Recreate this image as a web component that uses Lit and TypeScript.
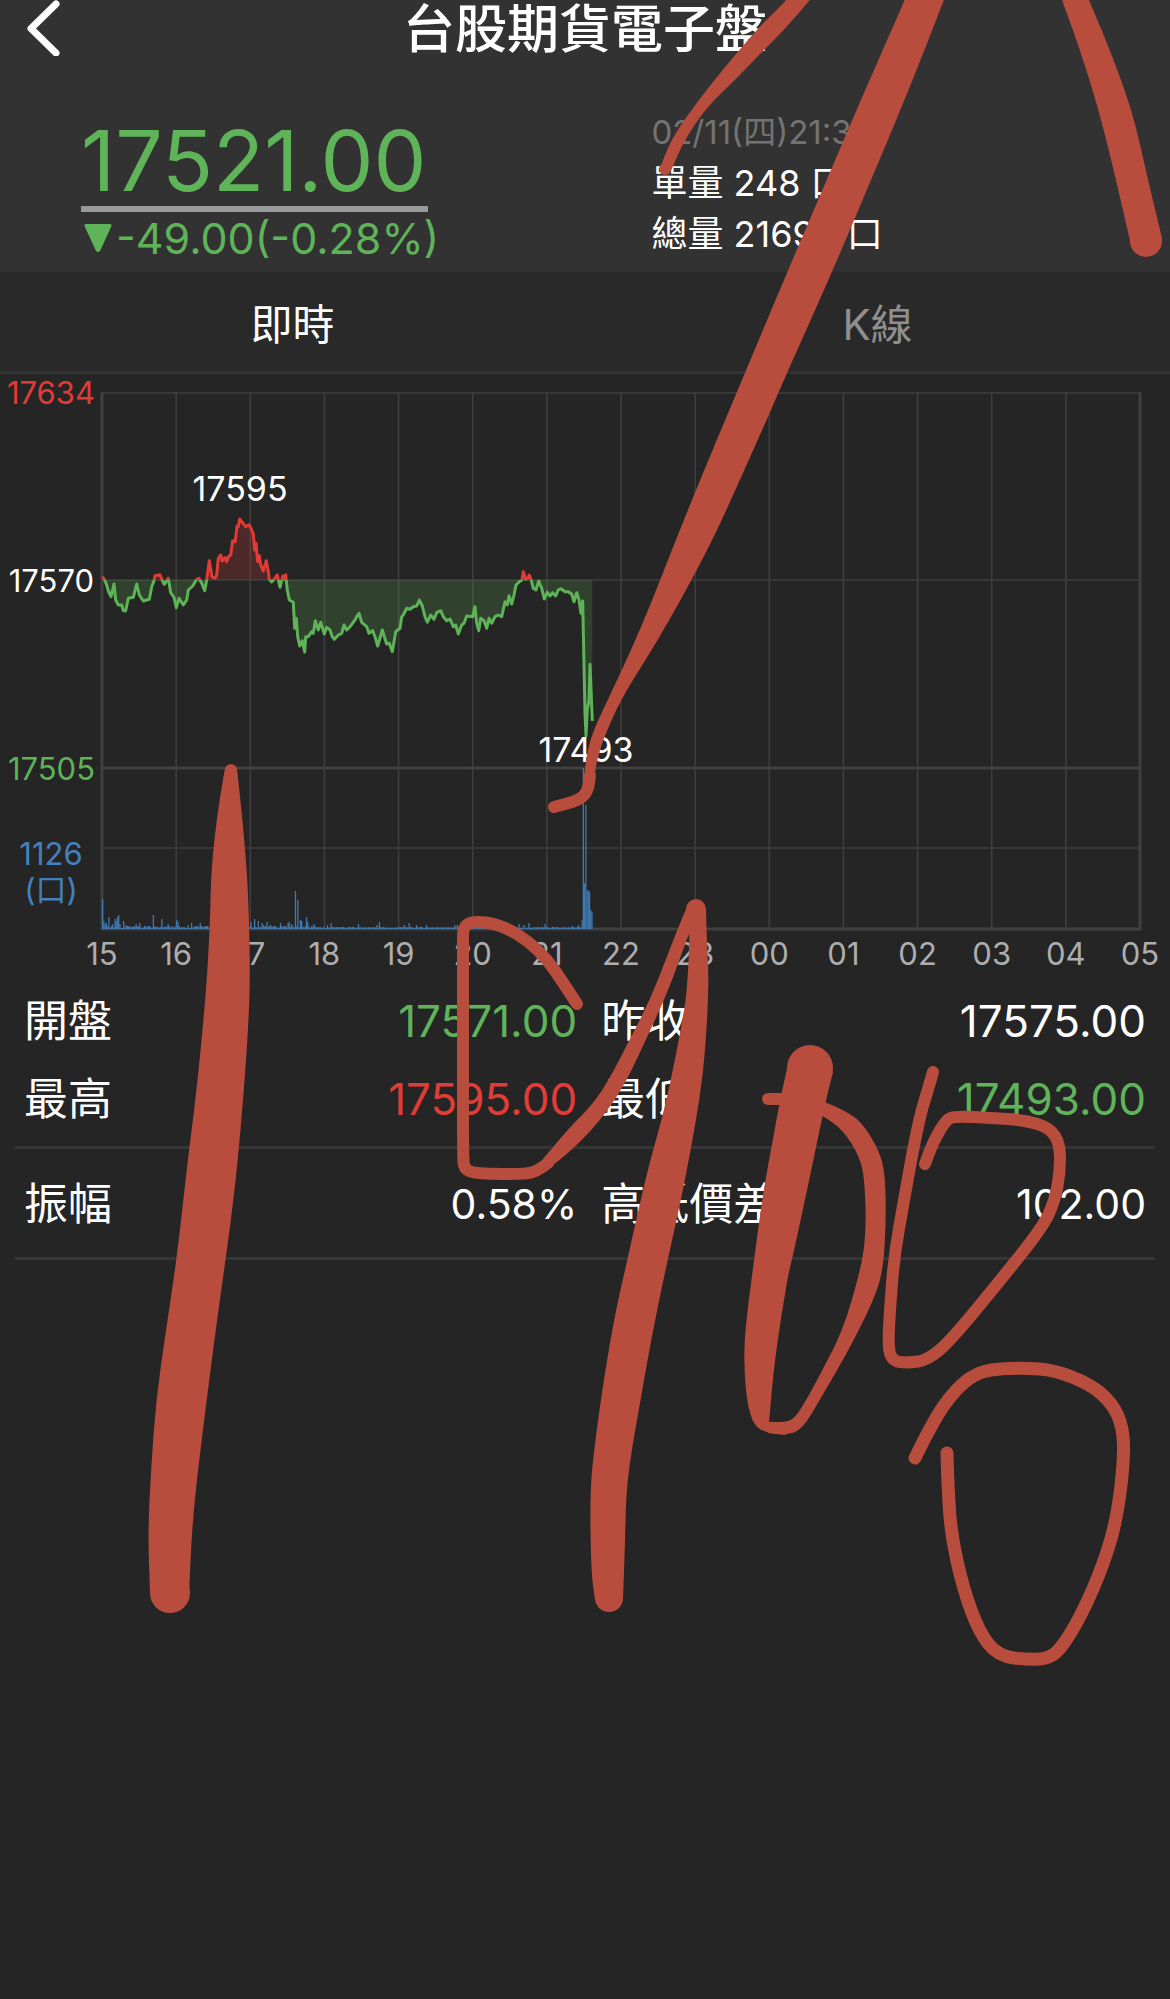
import { LitElement, html, svg, css } from "lit";
import { customElement, state } from "lit/decorators.js";

type Point = [number, number];

/** Smooth path that rounds each given point between its neighbours' midpoints. */
function curve(flat: number[], closed = true): string {
  const pts: Point[] = [];
  for (let i = 0; i < flat.length; i += 2) pts.push([flat[i], flat[i + 1]]);
  const n = pts.length;
  const mid = (a: Point, b: Point) => `${(a[0] + b[0]) / 2} ${(a[1] + b[1]) / 2}`;
  if (closed) {
    let d = `M${mid(pts[n - 1], pts[0])}`;
    pts.forEach((p, i) => (d += `Q${p[0]} ${p[1]} ${mid(p, pts[(i + 1) % n])}`));
    return d + "Z";
  }
  let d = `M${pts[0][0]} ${pts[0][1]}`;
  for (let i = 1; i < n - 1; i++) d += `Q${pts[i][0]} ${pts[i][1]} ${mid(pts[i], pts[i + 1])}`;
  return d + `L${pts[n - 1][0]} ${pts[n - 1][1]}`;
}

/* Price series in thirds of a pixel: x from the plot's left edge, y below the reference price. */
const EARLY = [
  307, 620, 313, 628, 320, 645, 325, 663, 333, 680, 342, 642, 347, 690, 355, 705, 365, 705, 370, 722, 377, 722, 385, 685,
  400, 682, 410, 642, 418, 675, 430, 693, 440, 690, 448, 688, 455, 650, 462, 632, 465, 617, 480, 614, 485, 628, 493, 643,
  500, 632, 505, 625, 512, 668, 522, 682, 529, 713, 537, 685, 550, 705, 560, 690, 565, 660, 578, 648, 590, 628, 597, 625,
  605, 640, 614, 662, 620, 630, 628, 572, 636, 620, 645, 625, 650, 615, 655, 565, 662, 555, 667, 573, 675, 563, 680, 575,
  685, 560, 692, 555, 698, 512, 706, 515, 711, 468, 715, 470, 719, 448, 727, 457, 737, 470, 747, 464, 753, 475, 760, 492,
  764, 540, 768, 520, 773, 575, 778, 557, 782, 585, 790, 603, 799, 572, 805, 605, 808, 628, 815, 636, 822, 628, 832, 615,
  840, 652, 848, 618, 853, 628, 857, 614, 862, 660, 868, 690, 880, 697, 884, 775, 889, 745, 893, 800, 899, 828, 907, 812,
  914, 846, 917, 800, 925, 800, 935, 785, 940, 790, 946, 752, 955, 780, 962, 757, 973, 792, 980, 772, 990, 780, 997, 800,
  1003, 808, 1015, 795, 1025, 790, 1032, 765, 1040, 780, 1050, 770, 1065, 750, 1070, 740, 1077, 730, 1085, 757, 1100, 770,
  1107, 790, 1118, 782, 1125, 800, 1133, 828, 1147, 780, 1160, 822, 1168, 820, 1177, 845, 1187, 785, 1200, 775,
];
const LATE = [
  425, 350, 430, 345, 440, 325, 450, 328, 460, 320, 470, 318, 478, 300, 487, 318, 495, 350, 502, 367, 512, 345, 522, 358,
  530, 338, 542, 332, 550, 350, 560, 362, 570, 357, 580, 380, 587, 375, 595, 402, 605, 375, 612, 370, 620, 348, 638, 350,
  645, 320, 650, 370, 656, 392, 662, 355, 672, 362, 680, 385, 687, 355, 695, 370, 705, 350, 715, 345, 725, 350, 735, 305,
  742, 315, 747, 287, 755, 312, 762, 285, 768, 255, 778, 245, 786, 240, 790, 215, 797, 238, 803, 235, 808, 225, 813, 238,
  820, 265, 828, 270, 836, 243, 845, 265, 853, 297, 862, 277, 870, 288, 878, 278, 887, 288, 895, 270, 903, 266, 915, 275,
  925, 275, 935, 282, 942, 305, 950, 278, 957, 300, 963, 340, 968, 303, 975, 640, 978, 708, 982, 630, 987, 600, 990, 493,
  997, 663,
];
const BASE_Y = 580;
const price: Point[] = [];
for (let i = 0; i < EARLY.length; i += 2) price.push([EARLY[i] / 3, BASE_Y + (EARLY[i + 1] - 630) / 3]);
for (let i = 0; i < LATE.length; i += 2) price.push([260 + LATE[i] / 3, BASE_Y + (LATE[i + 1] - 240) / 3]);
const priceLine = price.map(([x, y]) => `${x.toFixed(1)},${y.toFixed(1)}`).join(" ");
const priceArea = `102,${BASE_Y} ${priceLine} ${price[price.length - 1][0].toFixed(1)},${BASE_Y}`;

/* Volume peaks: minute of the session -> bar height. */
const PEAKS: Record<number, number> = {
  0: 30, 1: 8, 2: 5, 3: 6, 5: 12, 8: 5, 10: 10, 11: 8, 12: 12, 13: 14, 14: 5, 17: 8, 19: 4, 27: 5, 30: 6, 41: 14, 48: 10,
  53: 5, 60: 9, 61: 7, 69: 4, 72: 6, 79: 6, 120: 7, 123: 10, 126: 8, 129: 6, 130: 4, 133: 7, 136: 4, 144: 6, 150: 6, 151: 7,
  153: 5, 156: 38, 158: 29, 160: 9, 161: 8, 165: 12, 166: 7, 171: 5, 182: 4, 185: 6, 207: 5, 224: 7, 222: 4, 244: 4, 248: 6,
  254: 4, 262: 4, 285: 4, 287: 4, 326: 5, 329: 5, 337: 5, 341: 4, 345: 6, 358: 5, 380: 3, 385: 4, 388: 9, 389: 161, 390: 46,
  391: 124, 392: 38, 393: 39, 394: 37, 395: 19, 396: 17,
};
const MINUTE = 1038 / 840;
const bars = Array.from({ length: 397 }, (_, m) => {
  const noise = 1 + ((m * 37 + ((m * m) % 11)) % 5) / (m < 180 ? 2 : 4);
  return { x: 102 + m * MINUTE, h: PEAKS[m] ?? noise };
});

const HOURS = ["15", "16", "17", "18", "19", "20", "21", "22", "23", "00", "01", "02", "03", "04", "05"];
const hourX = (i: number) => 102 + (1038 / 14) * i;

@customElement("price-chart")
class PriceChart extends LitElement {
  static styles = css`
    :host { display: block; }
    .plot { display: block; width: 100%; height: auto; }
    .grid { stroke: #3e3e3e; stroke-width: 1.6; }
    .frame { stroke: #414141; stroke-width: 2.8; }
    text { font-family: Inter, "Noto Sans CJK TC", sans-serif; font-size: 31px; fill: #fff; }
    .axis { text-anchor: end; }
    .middle { text-anchor: middle; }
    .hour { text-anchor: middle; fill: #aeaeae; }
    .mark { text-anchor: middle; font-size: 34px; }
    .red { fill: #e23b36; }
    .green { fill: #5db356; }
    .blue { fill: #4580bd; }
    .area-up { fill: #e23b36; opacity: 0.2; }
    .area-down { fill: #5db356; opacity: 0.2; }
    .line { fill: none; stroke-width: 3; stroke-linejoin: round; }
    .line-up { stroke: #e23b36; }
    .line-down { stroke: #5db356; }
    .bar { fill: #4079b0; }
  `;

  render() {
    return html`<svg class="plot" viewBox="0 374 1170 608" role="img" aria-label="即時走勢">
      <defs>
        <clipPath id="above"><rect x="0" y="374" width="1170" height="206"></rect></clipPath>
        <clipPath id="below"><rect x="0" y="580" width="1170" height="400"></rect></clipPath>
      </defs>
      ${HOURS.map((_, i) => svg`<line class=${i === 0 || i === 14 ? "frame" : "grid"} x1=${hourX(i)} x2=${hourX(i)} y1="392" y2="930"></line>`)}
      <line class="grid" x1="102" x2="1140" y1="393" y2="393"></line>
      <line class="grid" x1="102" x2="1140" y1="580" y2="580"></line>
      <line class="frame" x1="102" x2="1140" y1="768" y2="768"></line>
      <line class="grid" x1="102" x2="1140" y1="848" y2="848"></line>
      <line class="frame" x1="101" x2="1141" y1="929" y2="929"></line>
      ${bars.map((b) => svg`<rect class="bar" x=${b.x.toFixed(1)} y=${929 - b.h} width="1.3" height=${b.h}></rect>`)}
      <polygon class="area-up" clip-path="url(#above)" points=${priceArea}></polygon>
      <polygon class="area-down" clip-path="url(#below)" points=${priceArea}></polygon>
      <polyline class="line line-up" clip-path="url(#above)" points=${priceLine}></polyline>
      <polyline class="line line-down" clip-path="url(#below)" points=${priceLine}></polyline>
      <text class="axis red" x="95" y="404">17634</text>
      <text class="axis" x="94" y="592">17570</text>
      <text class="axis green" x="95" y="780">17505</text>
      <text class="middle blue" x="51" y="865">1126</text>
      <text class="middle blue" x="51" y="901">(口)</text>
      <text class="mark" x="240" y="501">17595</text>
      <text class="mark" x="586" y="762">17493</text>
      ${HOURS.map((h, i) => svg`<text class="hour" x=${hourX(i)} y="965">${h}</text>`)}
    </svg>`;
  }
}

@customElement("ink-layer")
class InkLayer extends LitElement {
  static styles = css`
    :host { display: block; }
    .ink { display: block; width: 100%; height: auto; }
    .fill { fill: #b84d3d; }
    .pen { fill: none; stroke: #b84d3d; stroke-linecap: round; stroke-linejoin: round; }
  `;

  private fills = [
    // long left bar
    curve([225, 768, 225, 768, 220, 797, 215, 833, 211, 875, 210, 924, 206, 995, 196, 1096, 188, 1158, 177, 1257, 166, 1330,
      156, 1400, 151, 1470, 148, 1532, 150, 1593, 150, 1593, 189, 1596, 189, 1596, 192, 1526,
      200, 1452, 217, 1320, 226, 1257, 236, 1180, 244, 1090, 249, 1015, 250, 970, 249, 918, 247, 872, 242, 815, 237, 769, 237, 769]),
    // nine: sweep up to the peak
    curve([543, 1159, 543, 1159, 570, 1127, 593, 1104, 610, 1078, 631, 1037, 650, 1000, 666, 959, 680, 923, 687, 907, 687, 907,
      706, 911, 706, 911, 690, 930, 681, 956, 666, 996, 643, 1046, 624, 1086, 600, 1121, 572, 1150, 548, 1169, 548, 1169]),
    // nine: down stroke
    curve([687, 907, 687, 907, 706, 909, 706, 909, 707, 945, 709, 985, 705, 1054, 700, 1096, 692, 1143, 681, 1200, 665, 1272,
      652, 1335, 640, 1403, 630, 1460, 626, 1497, 625, 1544, 623, 1599, 623, 1599, 595, 1600, 595, 1600, 591, 1570, 590, 1492,
      594, 1450, 604, 1377, 616, 1309, 628, 1257, 639, 1207, 650, 1161, 666, 1104, 681, 1029, 687, 993, 690, 930]),
    // first zero: thick left side
    curve([788, 1064, 788, 1064, 780, 1100, 773, 1139, 763, 1193, 754, 1260, 745, 1330, 744, 1366, 747, 1403,
      754, 1426, 767, 1433, 786, 1435, 786, 1435, 786, 1422, 769, 1422, 769, 1422, 775, 1356, 788, 1275, 792, 1260, 808, 1186,
      825, 1104, 833, 1072, 833, 1072]),
    // first zero: right side
    curve([810, 1098, 810, 1098, 828, 1103, 843, 1110, 861, 1121, 879, 1150, 885, 1173, 886, 1215, 884, 1262, 877, 1293,
      850, 1348, 822, 1396, 802, 1430, 786, 1435, 768, 1433, 768, 1433, 768, 1422, 780, 1422, 792, 1421, 803, 1406, 822, 1371,
      843, 1330, 860, 1272, 866, 1236, 865, 1183, 860, 1157, 843, 1130, 822, 1115, 810, 1112, 810, 1112]),
    // arrow shaft
    curve([912, -20, 905, 0, 865, 90, 825, 184, 783, 282, 742, 380, 723, 425, 696, 490, 677, 537, 659, 583, 642, 625,
      622, 670, 599, 718, 590, 740, 586, 760, 583, 787, 583, 787, 594, 787, 594, 787, 595, 770, 599, 753, 605, 735, 622, 697,
      657, 642, 690, 583, 716, 533, 743, 473, 768, 417, 786, 375, 830, 277, 874, 173, 910, 87, 944, 0, 951, -20]),
    // arrow left barb
    curve([803, -20, 787, 0, 761, 25, 735, 55, 712, 83, 689, 113, 671, 140, 660, 168, 660, 168, 671, 171, 671, 171, 681, 147,
      696, 122, 712, 102, 735, 80, 761, 53, 784, 30, 810, 0, 826, -20]),
    // arrow right barb
    curve([1055, -20, 1062, 0, 1079, 47, 1098, 107, 1113, 167, 1131, 245, 1131, 245,
      1162, 238, 1162, 238, 1148, 180, 1133, 113, 1110, 50, 1089, 0, 1080, -20]),
  ];

  /* Rounded ends of the broad strokes: centre x, centre y, radius. */
  private caps = [
    [231, 770, 6], [170, 1593, 20], [696, 909, 10], [609, 1598, 14], [810, 1068, 23], [665, 169, 6], [1146, 241, 16],
  ];

  private pens = [
    { w: 12, d: curve([577, 1004, 562, 981, 547, 959, 528, 941, 507, 928, 487, 922, 470, 922, 463, 928, 463, 945, 463, 1045,
      463, 1155, 464, 1169, 474, 1173, 495, 1174, 526, 1174, 537, 1171, 548, 1163], false) },
    { w: 12, d: "M768 1099H800" },
    { w: 12, d: curve([933, 1072, 927, 1093, 921, 1112, 913, 1150, 904, 1200, 894, 1257, 890, 1309, 888, 1346, 892, 1361, 908, 1363,
      928, 1360, 951, 1340, 994, 1288, 1043, 1227, 1055, 1200, 1060, 1172, 1060, 1144, 1050, 1128, 1025, 1120, 991, 1118,
      955, 1116, 946, 1120, 933, 1142, 925, 1164], false) },
    { w: 13, d: curve([915, 1458, 934, 1419, 956, 1389, 975, 1374, 994, 1369, 1025, 1368, 1054, 1370, 1090, 1384, 1112, 1403,
      1123, 1427, 1124, 1461, 1117, 1518, 1104, 1563, 1083, 1612, 1063, 1646, 1050, 1658, 1030, 1660, 998, 1656, 979, 1632,
      963, 1588, 951, 1534, 948, 1487, 947, 1453], false) },
    { w: 12, d: curve([554, 807, 570, 803, 582, 798, 588, 790, 590, 775], false) },
  ];

  render() {
    return html`<svg class="ink" viewBox="0 0 1170 1999" aria-hidden="true">
      ${this.fills.map((d) => svg`<path class="fill" d=${d}></path>`)}
      ${this.caps.map(([x, y, r]) => svg`<circle class="fill" cx=${x} cy=${y} r=${r}></circle>`)}
      ${this.pens.map((p) => svg`<path class="pen" stroke-width=${p.w} d=${p.d}></path>`)}
    </svg>`;
  }
}

interface Stat { label: string; value: string; tone?: string; }

@customElement("app-root")
class AppRoot extends LitElement {
  static styles = css`
    :host {
      display: block;
      position: relative;
      min-height: 100vh;
      background: #252525;
      color: #fff;
      font-family: Inter, "Noto Sans CJK TC", sans-serif;
    }
    .top { background: #323232; }
    .nav { display: grid; grid-template-columns: 1fr auto 1fr; height: 56px; align-items: start; }
    .back { justify-self: start; display: block; margin: 0; padding: 0 0 0 24px; border: 0; background: none; color: inherit; }
    .back-icon { display: block; width: 40px; height: 56px; }
    .title { margin: 0; font-size: 52px; line-height: 60px; font-weight: 500; }
    .quote { display: grid; grid-template-columns: 11fr 10fr; align-items: end; padding: 51px 0 8px 81px; }
    .figures { display: flex; flex-direction: column; align-items: flex-start; color: #5fb359; }
    .price { padding-right: 2px; font-size: 84px; line-height: 90px; border-bottom: 6px solid #999; }
    .change { display: flex; align-items: center; gap: 4px; padding-left: 3px; font-size: 43px; line-height: 52px; }
    .arrow { width: 28px; height: 30px; fill: currentColor; }
    .facts { padding-bottom: 4px; font-size: 36px; line-height: 51px; }
    .fact { margin: 0; }
    .time { font-size: 33px; color: #737373; }
    .tabs { display: grid; grid-template-columns: 1fr 1fr; background: #292929; border-bottom: 3px solid #333; }
    .tab { margin: 0; padding: 0; border: 0; background: none; height: 99px; font: inherit; font-size: 42px; color: #8f8f8f; }
    .tab.on { color: #fff; }
    .stats { margin: 0 15px; }
    .group { display: grid; grid-template-columns: 66fr 65fr; column-gap: 24px; margin: 0; padding: 0 9px 8px; border-bottom: 3px solid #363636; }
    .group.single { padding: 16px 9px 14px; }
    .stat { display: flex; justify-content: space-between; font-size: 44px; line-height: 78px; }
    .label, .value { margin: 0; }
    .single .value { font-size: 41px; }
    .green { color: #5fb359; }
    .red { color: #e03c38; }
    .ink { position: absolute; top: 0; left: 0; width: 100%; pointer-events: none; }
  `;

  @state() private tab = "即時";

  private groups: Stat[][] = [
    [
      { label: "開盤", value: "17571.00", tone: "green" },
      { label: "昨收", value: "17575.00" },
      { label: "最高", value: "17595.00", tone: "red" },
      { label: "最低", value: "17493.00", tone: "green" },
    ],
    [
      { label: "振幅", value: "0.58%" },
      { label: "高低價差", value: "102.00" },
    ],
  ];

  render() {
    return html`
      <header class="top">
        <nav class="nav">
          <button class="back" aria-label="返回">
            <svg class="back-icon" viewBox="0 0 40 56" fill="none" stroke="#fff" stroke-width="7" stroke-linecap="round" stroke-linejoin="round">
              <path d="M32 4 7 28.500 32 53"></path>
            </svg>
          </button>
          <h1 class="title">台股期貨電子盤</h1>
        </nav>
        <section class="quote">
          <div class="figures">
            <div class="price">17521.00</div>
            <div class="change">
              <svg class="arrow" viewBox="0 0 28 30" aria-hidden="true"><path d="M2 1H26Q28 1 27.500 3L16 28Q14 30 12 28L.5 3Q0 1 2 1Z"></path></svg>
              <span>-49.00(-0.28%)</span>
            </div>
          </div>
          <div class="facts">
            <p class="fact time">02/11(四)21:37</p>
            <p class="fact">單量 248 口</p>
            <p class="fact">總量 21695 口</p>
          </div>
        </section>
      </header>
      <div class="tabs" role="tablist">
        ${["即時", "K線"].map((t) => html`<button class="tab ${t === this.tab ? "on" : ""}" role="tab" aria-selected=${t === this.tab} @click=${() => (this.tab = t)}>${t}</button>`)}
      </div>
      <price-chart></price-chart>
      <section class="stats">
        ${this.groups.map((g) => html`<dl class="group ${g.length === 2 ? "single" : ""}">
          ${g.map((s) => html`<div class="stat"><dt class="label">${s.label}</dt><dd class="value ${s.tone ?? ""}">${s.value}</dd></div>`)}
        </dl>`)}
      </section>
      <ink-layer class="ink"></ink-layer>
    `;
  }
}
